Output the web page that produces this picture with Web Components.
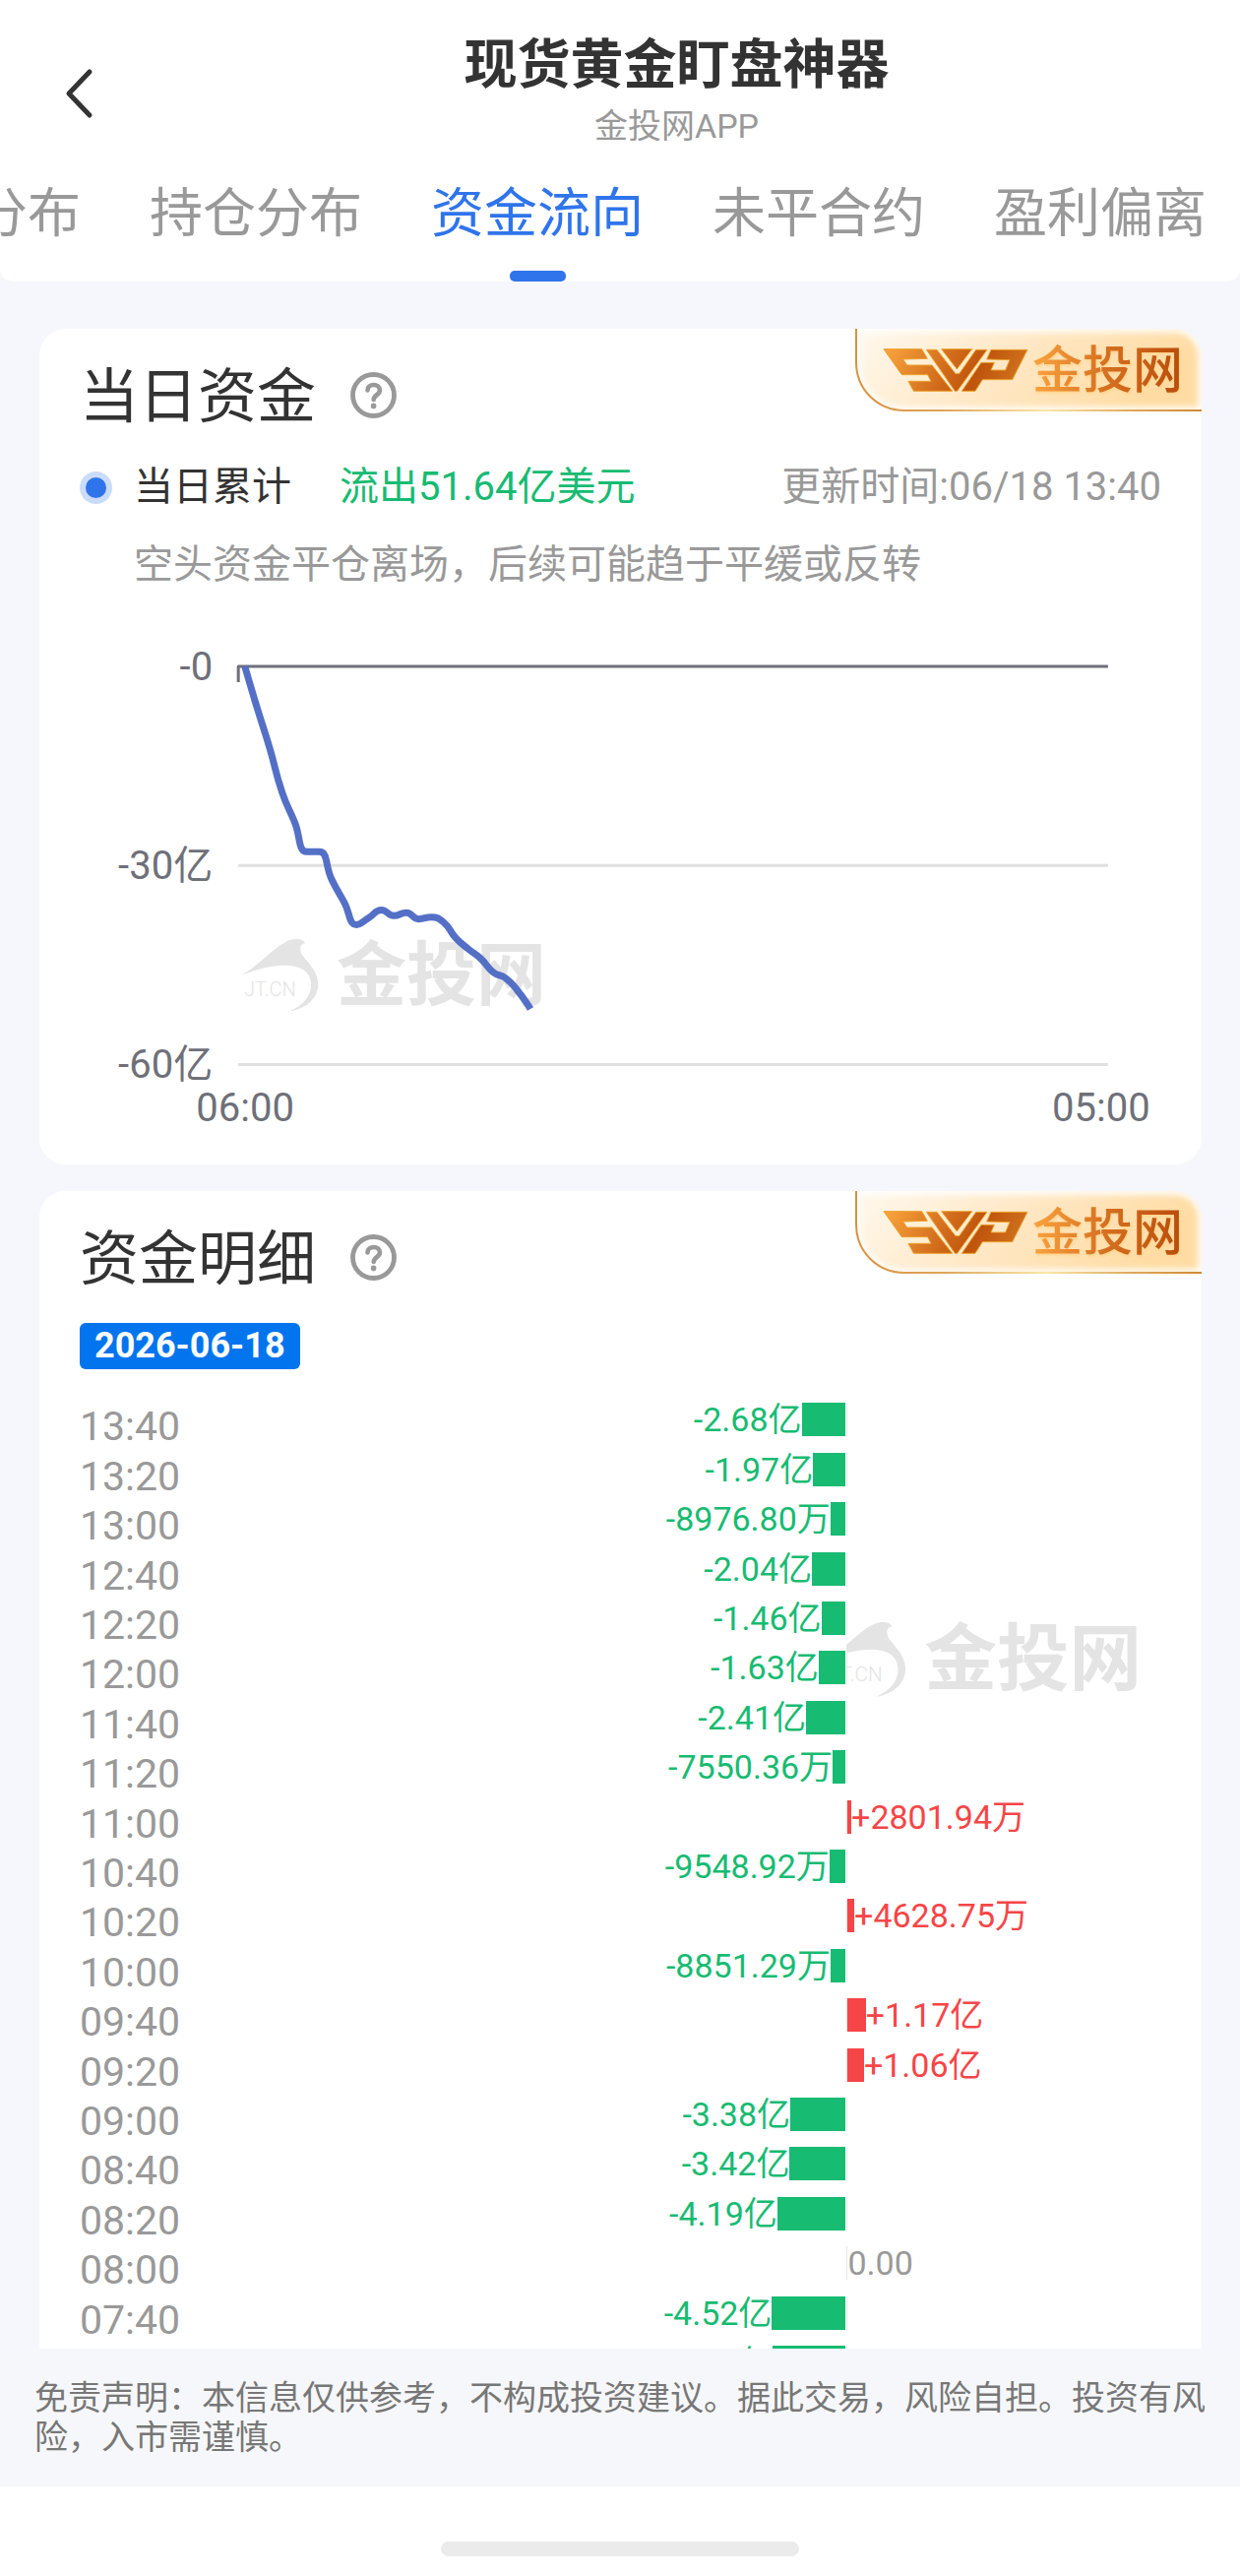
<!DOCTYPE html>
<html lang="zh-CN">
<head>
<meta charset="utf-8">
<meta name="viewport" content="width=device-width, initial-scale=1">
<title>现货黄金盯盘神器</title>
<style>
  html, body { margin: 0; height: 100%; }
  body {
    font-family: Roboto, "Noto Sans CJK SC", sans-serif;
    color: #333;
    background: #f5f7fd;
  }
</style>
</head>
<body>
<app-shell>
  <app-header slot="top" heading="现货黄金盯盘神器" sub="金投网APP"></app-header>
  <tab-bar slot="top" items="挂单分布,持仓分布,资金流向,未平合约,盈利偏离" current="2"></tab-bar>

  <flow-card heading="当日资金">
    <day-summary>
      <span slot="label">当日累计</span>
      <span slot="value">流出51.64亿美元</span>
      <span slot="time">更新时间:06/18 13:40</span>
      <span slot="note">空头资金平仓离场，后续可能趋于平缓或反转</span>
    </day-summary>
    <trend-chart></trend-chart>
  </flow-card>

  <flow-card class="fill" heading="资金明细">
    <date-tag>2026-06-18</date-tag>
    <flow-bars></flow-bars>
  </flow-card>

  <risk-note slot="bottom">免责声明：本信息仅供参考，不构成投资建议。据此交易，风险自担。投资有风险，入市需谨慎。</risk-note>
  <home-indicator slot="bottom"></home-indicator>
</app-shell>

<script>
const define = (name, html, setup) => {
  const tpl = document.createElement('template');
  tpl.innerHTML = html;
  customElements.define(name, class extends HTMLElement {
    constructor() {
      super();
      this.attachShadow({ mode: 'open' }).append(tpl.content.cloneNode(true));
    }
    connectedCallback() {
      if (setup && !this.ready) { this.ready = true; setup(this, this.shadowRoot); }
    }
  });
};

/* Amounts are in 亿 (1e8 USD), newest first. */
const FLOWS = [
  ['13:40', '-2.68亿', -2.68], ['13:20', '-1.97亿', -1.97], ['13:00', '-8976.80万', -0.8977],
  ['12:40', '-2.04亿', -2.04], ['12:20', '-1.46亿', -1.46], ['12:00', '-1.63亿', -1.63],
  ['11:40', '-2.41亿', -2.41], ['11:20', '-7550.36万', -0.755], ['11:00', '+2801.94万', 0.2802],
  ['10:40', '-9548.92万', -0.9549], ['10:20', '+4628.75万', 0.4629], ['10:00', '-8851.29万', -0.8851],
  ['09:40', '+1.17亿', 1.17], ['09:20', '+1.06亿', 1.06], ['09:00', '-3.38亿', -3.38],
  ['08:40', '-3.42亿', -3.42], ['08:20', '-4.19亿', -4.19], ['08:00', '0.00', 0],
  ['07:40', '-4.52亿', -4.52], ['', '-4.47亿', -4.47]
];
const TOTAL = -51.64;
const EARLY = [-12.3, -6.3, 0];

define('app-shell', `
  <style>
    :host { display: flex; flex-direction: column; height: 100vh; overflow: hidden; }
    .top { background: #fff; border-radius: 0 0 13px 13px; }
    main { flex: 1; min-height: 0; display: flex; flex-direction: column; gap: 27px; padding: 48px 39px 0 40px; }
  </style>
  <div class="top"><slot name="top"></slot></div>
  <main><slot></slot></main>
  <footer><slot name="bottom"></slot></footer>`);

define('app-header', `
  <style>
    :host { display: flex; align-items: center; padding-top: 37px; }
    button { width: 115px; height: 60px; margin-bottom: 6px; padding: 0 0 0 64px; border: 0; background: none; display: flex; align-items: center; }
    .titles { flex: 1; text-align: center; }
    h1 { margin: 0; font-size: 54px; line-height: 60px; font-weight: 700; color: #333; }
    p { margin: 0; font-size: 34px; line-height: 62px; color: #999; }
  </style>
  <button type="button" aria-label="返回">
    <svg width="33" height="54" viewBox="0 0 33 54" fill="none" stroke="#333" stroke-width="5" stroke-linecap="round" stroke-linejoin="round"><path d="M27 5 6 27 27 49"/></svg>
  </button>
  <div class="titles"><h1></h1><p></p></div>`,
  (el, root) => {
    root.querySelector('h1').textContent = el.getAttribute('heading');
    root.querySelector('p').textContent = el.getAttribute('sub');
  });

define('tab-bar', `
  <style>
    :host { display: block; }
    nav { display: flex; justify-content: flex-end; gap: 70px; padding: 29px 34px 0 0; overflow: hidden; }
    button {
      flex: none; display: flex; flex-direction: column; align-items: center; gap: 27px;
      padding: 0; border: 0; background: none; font-family: inherit; font-size: 54px; line-height: 60px;
      color: #999; white-space: nowrap;
    }
    button::after { content: ""; width: 57px; height: 11px; border-radius: 5px; }
    button[aria-current] { color: #2f74eb; }
    button[aria-current]::after { background: #2f74eb; }
  </style>
  <nav></nav>`,
  (el, root) => {
    const nav = root.querySelector('nav');
    el.getAttribute('items').split(',').forEach((text, i) => {
      const b = document.createElement('button');
      b.type = 'button';
      b.textContent = text;
      if (i === Number(el.getAttribute('current'))) b.setAttribute('aria-current', 'page');
      nav.append(b);
    });
  });

define('flow-card', `
  <style>
    :host { display: block; flex: none; position: relative; background: #fff; border-radius: 27px; overflow: hidden; }
    :host(.fill) { flex: 1; min-height: 0; border-radius: 27px 27px 0 0; }
    header { display: flex; align-items: center; gap: 35px; padding: 36px 41px 0; height: 62px; }
    h2 { margin: 0; padding-top: 6px; font-size: 60px; line-height: 62px; font-weight: 400; color: #333; }
    button { width: 47px; height: 47px; padding: 0; border: 0; background: none; }
    svg { display: block; }
    svp-badge { position: absolute; top: 0; right: 0; }
  </style>
  <header>
    <h2></h2>
    <button type="button" aria-label="说明">
      <svg width="47" height="47" viewBox="0 0 47 47" fill="none" stroke="#999">
        <circle cx="23.5" cy="23.5" r="21" stroke-width="4.8"/>
        <path d="M17.5 18.5c0-7.4 12.4-7.4 12.4 0 0 4.6-6 4.6-6.2 9.5" stroke-width="4.6" stroke-linecap="round"/>
        <circle cx="23.6" cy="34.4" r="2.8" fill="#999" stroke="none"/>
      </svg>
    </button>
  </header>
  <svp-badge></svp-badge>
  <slot></slot>`,
  (el, root) => { root.querySelector('h2').textContent = el.getAttribute('heading'); });

define('svp-badge', `
  <style>
    :host { display: block; }
    svg { display: block; }
    text { font-size: 51px; font-weight: 500; filter: drop-shadow(1px 2px 1px #ffd590); }
  </style>
  <svg width="352" height="84" viewBox="0 0 352 84">
    <defs>
      <linearGradient id="bg" x1="0" x2="1" y1="0" y2=".25"><stop offset="0" stop-color="#fff9ef"/><stop offset=".5" stop-color="#ffe8c6"/><stop offset="1" stop-color="#ffdca3"/></linearGradient>
      <linearGradient id="edge"><stop offset="0" stop-color="#d9913f"/><stop offset=".25" stop-color="#e0a45a"/><stop offset=".55" stop-color="#fbe7a6"/><stop offset=".8" stop-color="#e0a75c"/><stop offset="1" stop-color="#cf8a38"/></linearGradient>
      <linearGradient id="logo" x1="0" x2="1" y1="0" y2=".15"><stop offset="0" stop-color="#fba63e"/><stop offset=".5" stop-color="#d06a1a"/><stop offset=".72" stop-color="#bf540c"/><stop offset="1" stop-color="#cf701d"/></linearGradient>
      <linearGradient id="word"><stop offset="0" stop-color="#fba33f"/><stop offset=".5" stop-color="#d56f20"/><stop offset="1" stop-color="#b94c0a"/></linearGradient>
      <filter id="soft" x="-10%" y="-20%" width="120%" height="140%"><feGaussianBlur stdDeviation="3"/></filter>
      <clipPath id="shape"><path d="M1 0H325a27 27 0 0 1 27 27V83H50C23 83 1 62 1 34Z"/></clipPath>
    </defs>
    <g clip-path="url(#shape)">
      <rect width="352" height="84" fill="url(#bg)"/>
      <path d="M1 0H325a27 27 0 0 1 27 27V83H50C23 83 1 62 1 34Z" fill="none" stroke="#fff" stroke-width="7" filter="url(#soft)"/>
    </g>
    <path d="M1 0V34C1 62 23 83 50 83H352" fill="none" stroke="url(#edge)" stroke-width="2"/>
    <path transform="translate(22 11) scale(.33333)" fill="url(#logo)" stroke="#eba22c" stroke-width="3" stroke-linejoin="round" d="M21 29H137L154 58 80 60 92 78H168L230 157H112L96 127H165L155 107H76ZM151 31H183L240 104H251L302 31H336L245 157H238ZM197 29H290L244 90ZM348 31H459L413 122H322L300 157H259L318 70H358L348 93H392L405 62 335 60Z"/>
    <text x="180" y="60" fill="url(#word)">金投网</text>
  </svg>`);

define('day-summary', `
  <style>
    :host { display: block; padding: 40px 41px 0; font-size: 40px; line-height: 46px; }
    .row { display: flex; align-items: center; }
    i { width: 21px; height: 21px; border: 6px solid #cbdcf9; border-radius: 50%; background: #2f74eb; margin-right: 22px; }
    .value { flex: 1; margin-left: 49px; color: #17bb72; }
    .time, .note { color: #999; }
    .note { margin: 33px 0 0 55px; }
  </style>
  <div class="row"><i></i><slot name="label"></slot><span class="value"><slot name="value"></slot></span><span class="time"><slot name="time"></slot></span></div>
  <div class="note"><slot name="note"></slot></div>`);

define('jt-watermark', `
  <style>
    :host { display: block; }
    svg { display: block; width: 100%; }
    .word { font-size: 71px; font-weight: 700; }
    .site { font-size: 20px; font-weight: 300; }
  </style>
  <svg viewBox="0 0 310 76" fill="#e4e4e4">
    <path transform="translate(-25 -23) scale(.33333)" d="M75 182C135 152 190 76 238 72 256 70 268 77 270 85 254 87 251 102 262 122 286 150 310 175 310 212 308 255 270 286 222 292 258 278 288 250 288 212 288 180 270 158 225 153 180 149 130 162 75 182Z"/>
    <text class="site" x="3" y="59">JT.CN</text>
    <text class="word" x="97" y="62">金投网</text>
  </svg>`);

define('trend-chart', `
  <style>
    :host { display: block; position: relative; }
    .plot { position: relative; display: block; width: 100%; }
    jt-watermark { position: absolute; left: 205px; top: 356px; width: 310px; }
    text { font-size: 40px; fill: #6e7079; }
  </style>
  <jt-watermark></jt-watermark>
  <svg class="plot" viewBox="0 2 1180 586" fill="none">
    <path d="M202 284H1085M202 486H1085" stroke="#e0e0e0" stroke-width="3"/>
    <path d="M202 98V82H1085" stroke="#6e7079" stroke-width="3" stroke-linejoin="round"/>
    <path class="line" stroke="#5470c6" stroke-width="7" stroke-linejoin="bevel"/>
    <g text-anchor="end"><text x="176" y="96">-0</text><text x="176" y="298">-30亿</text><text x="176" y="500">-60亿</text></g>
    <g text-anchor="middle"><text x="209" y="544">06:00</text><text x="1078" y="544">05:00</text></g>
  </svg>`,
  (el, root) => {
    const totals = [];
    let sum = TOTAL;
    FLOWS.forEach(f => { totals.push(sum); sum -= f[2]; });
    totals.push(sum);
    const values = totals.concat(EARLY).reverse();
    const pts = values.map((v, i) => [208.6 + i * 290 / (values.length - 1), 82 - v * 202 / 30]);
    const clamp = (p, a, b) => p.map((c, k) => Math.max(Math.min(a[k], b[k]), Math.min(Math.max(a[k], b[k]), c)));
    let d = 'M' + pts[0], cp = pts[0];
    for (let i = 1; i < pts.length; i++) {
      const p = pts[i], prev = pts[i - 1], next = pts[i + 1];
      let inCp = p, outCp = p;
      if (next) {
        const v = [next[0] - prev[0], next[1] - prev[1]];
        const lp = Math.hypot(p[0] - prev[0], p[1] - prev[1]);
        const ln = Math.hypot(next[0] - p[0], next[1] - p[1]);
        outCp = clamp(p.map((c, k) => c + v[k] * 0.5 * ln / (ln + lp)), next, p);
        inCp = clamp(p.map((c, k) => c - (outCp[k] - c) * lp / ln), prev, p);
        outCp = p.map((c, k) => c + (c - inCp[k]) * ln / lp);
      }
      d += `C${cp} ${inCp} ${p}`;
      cp = outCp;
    }
    root.querySelector('.line').setAttribute('d', d);
  });

define('date-tag', `
  <style>
    :host { display: table; margin: 36px 0 0 41px; padding: 0 15px; border-radius: 6px; background: #0275ee;
      color: #fff; font-size: 36px; line-height: 47px; font-weight: 700; }
  </style>
  <slot></slot>`);

define('flow-bars', `
  <style>
    :host { display: grid; grid-template-columns: 459px 1fr; height: 1008px; margin: 34px 41px 0; }
    .times, .bars { display: grid; grid-auto-rows: 1fr; }
    .times { font-size: 41px; line-height: 48px; color: #999; }
    .bars { position: relative; font-size: 34px; line-height: 34px; white-space: nowrap; }
    .mark { position: absolute; left: 50%; right: 0; top: 0; bottom: 0; overflow: hidden; }
    jt-watermark { position: absolute; left: -21px; top: 222px; width: 321px; }
    .row { position: relative; display: grid; grid-template-columns: 1fr 1px 1fr; height: 34px; }
    .row::before { content: ""; grid-area: 1 / 2; background: #e6e6e6; }
    .side { display: flex; align-items: stretch; height: 34px; color: #999; }
    .side b { background: currentColor; }
    .out { grid-area: 1 / 1; flex-direction: row-reverse; color: #17bb72; margin-right: 1px; }
    .in { grid-area: 1 / 3; color: #f64547; }
    .zero { grid-area: 1 / 3; padding-left: 1px; }
  </style>
  <div class="times"></div>
  <div class="bars"><div class="mark"><jt-watermark></jt-watermark></div></div>`,
  (el, root) => {
    const times = root.querySelector('.times'), bars = root.querySelector('.bars');
    for (const [time, label, v] of FLOWS) {
      const t = document.createElement('time');
      t.textContent = time;
      times.append(t);
      const row = document.createElement('div');
      row.className = 'row';
      const side = document.createElement('div');
      side.className = 'side ' + (v < 0 ? 'out' : v > 0 ? 'in' : 'zero');
      const bar = document.createElement('b');
      bar.style.width = Math.abs(v) * 5.15 + '%';
      const text = document.createElement('span');
      text.textContent = label;
      side.append(bar, text);
      row.append(side);
      bars.append(row);
    }
  });

define('risk-note', `
  <style>
    :host { display: block; padding: 30px 35px; background: #f6f7fa; color: #777; font-size: 34px; line-height: 40px; }
  </style>
  <slot></slot>`);

define('home-indicator', `
  <style>
    :host { display: flex; justify-content: center; padding: 56px 0 20px; background: #fff; }
    i { width: 364px; height: 15px; border-radius: 8px; background: #ebebeb; }
  </style>
  <i></i>`);
</script>
</body>
</html>
